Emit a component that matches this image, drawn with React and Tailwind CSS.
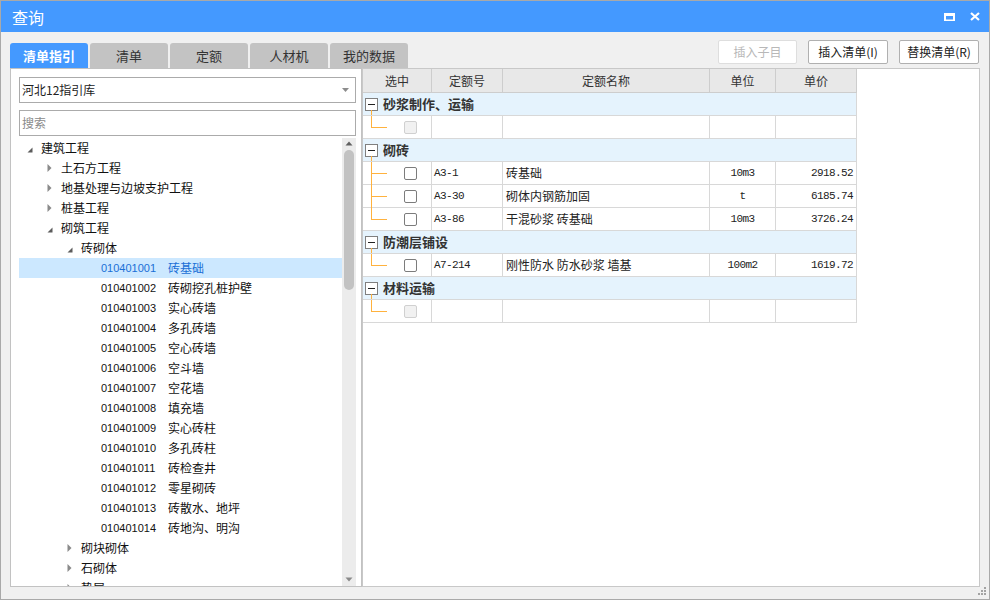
import React from 'react';

const tree = [
  { lv: 0, open: true, text: '建筑工程' },
  { lv: 1, open: false, text: '土石方工程' },
  { lv: 1, open: false, text: '地基处理与边坡支护工程' },
  { lv: 1, open: false, text: '桩基工程' },
  { lv: 1, open: true, text: '砌筑工程' },
  { lv: 2, open: true, text: '砖砌体' },
  { lv: 3, code: '010401001', text: '砖基础', sel: true },
  { lv: 3, code: '010401002', text: '砖砌挖孔桩护壁' },
  { lv: 3, code: '010401003', text: '实心砖墙' },
  { lv: 3, code: '010401004', text: '多孔砖墙' },
  { lv: 3, code: '010401005', text: '空心砖墙' },
  { lv: 3, code: '010401006', text: '空斗墙' },
  { lv: 3, code: '010401007', text: '空花墙' },
  { lv: 3, code: '010401008', text: '填充墙' },
  { lv: 3, code: '010401009', text: '实心砖柱' },
  { lv: 3, code: '010401010', text: '多孔砖柱' },
  { lv: 3, code: '010401011', text: '砖检查井' },
  { lv: 3, code: '010401012', text: '零星砌砖' },
  { lv: 3, code: '010401013', text: '砖散水、地坪' },
  { lv: 3, code: '010401014', text: '砖地沟、明沟' },
  { lv: 2, open: false, text: '砌块砌体' },
  { lv: 2, open: false, text: '石砌体' },
  { lv: 2, open: false, text: '垫层' },
];

const indent = ['pl-[0px]', 'pl-[20px]', 'pl-[40px]', 'pl-[60px]'];

const groups = [
  { name: '砂浆制作、运输', rows: [null] },
  {
    name: '砌砖',
    rows: [
      { code: 'A3-1', name: '砖基础', unit: '10m3', price: '2918.52' },
      { code: 'A3-30', name: '砌体内钢筋加固', unit: 't', price: '6185.74' },
      { code: 'A3-86', name: '干混砂浆 砖基础', unit: '10m3', price: '3726.24' },
    ],
  },
  {
    name: '防潮层铺设',
    rows: [{ code: 'A7-214', name: '刚性防水 防水砂浆 墙基', unit: '100m2', price: '1619.72' }],
  },
  { name: '材料运输', rows: [null] },
];

const tabs = ['清单指引', '清单', '定额', '人材机', '我的数据'];

function Arrow({ open }) {
  if (open === undefined) return <div className="w-[22px] shrink-0" />;
  return (
    <div className="w-[22px] shrink-0 flex items-center pl-[8px]">
      {open ? (
        <svg width="6" height="6" className="mt-[3px]">
          <path d="M5.5 0.5 L5.5 5.5 L0.5 5.5Z" fill="#5c5c5c" />
        </svg>
      ) : (
        <svg width="5" height="8">
          <path d="M0.5 0 L4.5 4 L0.5 8Z" fill="#8a8a8a" />
        </svg>
      )}
    </div>
  );
}

function Checkbox({ disabled }) {
  return disabled ? (
    <div className="w-[13px] h-[13px] rounded-[2px] border border-[#d0d0d0] bg-[#f1f1f1]" />
  ) : (
    <div className="w-[13px] h-[13px] rounded-[2px] border border-[#7c7c7c] bg-white" />
  );
}

function Connector({ last }) {
  return (
    <svg width="24" height="23" className="absolute left-0 top-0" shapeRendering="crispEdges">
      <path d={last ? 'M8.5 0 V11.5 H24' : 'M8.5 0 V23 M8.5 11.5 H24'} stroke="#ffb23e" strokeWidth="1" fill="none" />
    </svg>
  );
}

export default function App() {
  return (
    <div className="w-[990px] h-[600px] border border-[#a9a9a9] bg-[#f0f0f0] flex flex-col relative overflow-hidden font-['Noto_Sans_CJK_SC',sans-serif] text-[#222]">
      {/* title bar */}
      <div className="h-[31px] shrink-0 bg-[#4499ff] flex items-center pl-[11px] pr-[9px]">
        <span className="text-white text-[16px] leading-none">查询</span>
        <div className="ml-auto flex items-center gap-[15px]">
          <svg width="11" height="8">
            <path d="M0 0H11V8H0Z M2 3H9V6.5H2Z" fill="white" fillRule="evenodd" />
          </svg>
          <svg width="10" height="9">
            <path d="M1 1 L9 8 M9 1 L1 8" stroke="white" strokeWidth="2.2" />
          </svg>
        </div>
      </div>

      {/* body */}
      <div className="flex-1 flex flex-col px-[9px] pt-[8px] pb-[12px] min-h-0">
        {/* tabs + buttons */}
        <div className="h-[28px] shrink-0 flex">
          <div className="flex gap-[2px] self-end">
            {tabs.map((t, i) =>
              i === 0 ? (
                <div key={t} className="w-[78px] h-[25px] rounded-t-[3px] bg-[#4499ff] text-white font-bold text-[13px] flex items-center justify-center">
                  {t}
                </div>
              ) : (
                <div key={t} className="w-[78px] h-[25px] rounded-t-[3px] bg-[#c3c3c3] text-[#333] text-[13px] flex items-center justify-center">
                  {t}
                </div>
              )
            )}
          </div>
          <div className="ml-auto flex gap-[11px] self-start pr-[1px]">
            <div className="w-[79px] h-[24px] rounded-[2px] border border-[#dedede] bg-white text-[#b8b8b8] text-[12px] flex items-center justify-center">插入子目</div>
            <div className="w-[80px] h-[24px] rounded-[2px] border border-[#b0b0b0] bg-white text-[#222] text-[12px] flex items-center justify-center">插入清单(I)</div>
            <div className="w-[80px] h-[24px] rounded-[2px] border border-[#b0b0b0] bg-white text-[#222] text-[12px] flex items-center justify-center">替换清单(R)</div>
          </div>
        </div>

        {/* panels */}
        <div className="flex-1 flex min-h-0">
          {/* left panel */}
          <div className="w-[352px] shrink-0 bg-white border border-[#c2c2c2] flex flex-col pt-[8px] pl-[8px] pr-[5px] min-h-0">
            <div className="h-[26px] shrink-0 border border-[#ababab] flex items-center pl-[2px] pr-[6px] text-[12px] text-[#222]">
              <span>河北12指引库</span>
              <svg width="7" height="4" className="ml-auto">
                <path d="M0 0H7L3.5 4Z" fill="#8c8c8c" />
              </svg>
            </div>
            <div className="h-[26px] mt-[7px] shrink-0 border border-[#ababab] flex items-center pl-[2px] text-[12px] text-[#8a8a8a]">
              搜索
            </div>
            <div className="flex-1 flex mt-[2px] min-h-0">
              <div className="flex-1 overflow-hidden">
                {tree.map((n, i) => (
                  <div
                    key={i}
                    className={
                      'h-[20px] flex items-center text-[12px] leading-[20px] whitespace-nowrap ' +
                      indent[n.lv] +
                      (n.sel ? ' bg-[#cce8ff] text-[#1a6fd6]' : ' text-[#111]')
                    }
                  >
                    <Arrow open={n.open} />
                    {n.code ? (
                      <>
                        <span className="w-[67px] shrink-0 font-['Liberation_Sans',sans-serif] text-[11px]">{n.code}</span>
                        <span>{n.text}</span>
                      </>
                    ) : (
                      <span>{n.text}</span>
                    )}
                  </div>
                ))}
              </div>
              <div className="w-[14px] shrink-0 bg-[#ececec] flex flex-col items-center pt-[1px] pb-[2px]">
                <svg width="8" height="10" className="shrink-0">
                  <path d="M0.5 6.5 L4 2.5 L7.5 6.5Z" fill="#606060" />
                </svg>
                <div className="w-[10px] h-[140px] mt-[1px] rounded-full bg-[#c2c2c2]" />
                <svg width="8" height="10" className="mt-auto shrink-0">
                  <path d="M0.5 3.5 L4 7.5 L7.5 3.5Z" fill="#8a8a8a" />
                </svg>
              </div>
            </div>
          </div>

          {/* right panel */}
          <div className="flex-1 bg-white border border-[#c8c8c8] min-w-0">
            <div className="w-[494px] grid grid-cols-[69px_71px_207px_66px_81px] text-[12px]">
              {['选中', '定额号', '定额名称', '单位', '单价'].map((h) => (
                <div key={h} className="h-[24px] bg-[#e8e8e8] border-r border-b border-[#cdcdcd] flex items-center justify-center text-[#333]">
                  {h}
                </div>
              ))}
              {groups.map((g) => (
                <React.Fragment key={g.name}>
                  <div className="col-span-5 h-[23px] relative bg-[#e5f3fd] border-b border-r border-[#d8d8d8] flex items-center pl-[2px]">
                    <div className="w-[13px] h-[13px] border border-[#7f7f7f] bg-white flex items-center justify-center">
                      <div className="w-[7px] h-px bg-[#222]" />
                    </div>
                    <span className="ml-[5px] font-bold text-[13px] text-[#333]">{g.name}</span>
                    <svg width="10" height="5" className="absolute left-0 bottom-0" shapeRendering="crispEdges">
                      <path d="M8.5 0 V5" stroke="#ffb23e" strokeWidth="1" />
                    </svg>
                  </div>
                  {g.rows.map((r, j) => {
                    const last = j === g.rows.length - 1;
                    return (
                      <React.Fragment key={j}>
                        <div className="h-[23px] relative border-r border-b border-[#d8d8d8] flex items-center pl-[41px]">
                          <Connector last={last} />
                          <Checkbox disabled={!r} />
                        </div>
                        <div className="h-[23px] border-r border-b border-[#d8d8d8] flex items-center pl-[2px] font-['Liberation_Mono',monospace] text-[11px] tracking-[-0.6px]">
                          {r && r.code}
                        </div>
                        <div className="h-[23px] border-r border-b border-[#d8d8d8] flex items-center pl-[3px] whitespace-nowrap">
                          {r && r.name}
                        </div>
                        <div className="h-[23px] border-r border-b border-[#d8d8d8] flex items-center justify-center font-['Liberation_Mono',monospace] text-[11px] tracking-[-0.6px]">
                          {r && r.unit}
                        </div>
                        <div className="h-[23px] border-r border-b border-[#d8d8d8] flex items-center justify-end pr-[3px] font-['Liberation_Mono',monospace] text-[11px] tracking-[-0.6px]">
                          {r && r.price}
                        </div>
                      </React.Fragment>
                    );
                  })}
                </React.Fragment>
              ))}
            </div>
          </div>
        </div>
      </div>

      {/* resize grip */}
      <svg width="9" height="9" className="absolute right-[2px] bottom-[3px]">
        <rect x="6" y="0" width="2" height="2" fill="#a3a3a3" />
        <rect x="3" y="3" width="2" height="2" fill="#a3a3a3" />
        <rect x="6" y="3" width="2" height="2" fill="#a3a3a3" />
        <rect x="0" y="6" width="2" height="2" fill="#a3a3a3" />
        <rect x="3" y="6" width="2" height="2" fill="#a3a3a3" />
        <rect x="6" y="6" width="2" height="2" fill="#a3a3a3" />
      </svg>
    </div>
  );
}
